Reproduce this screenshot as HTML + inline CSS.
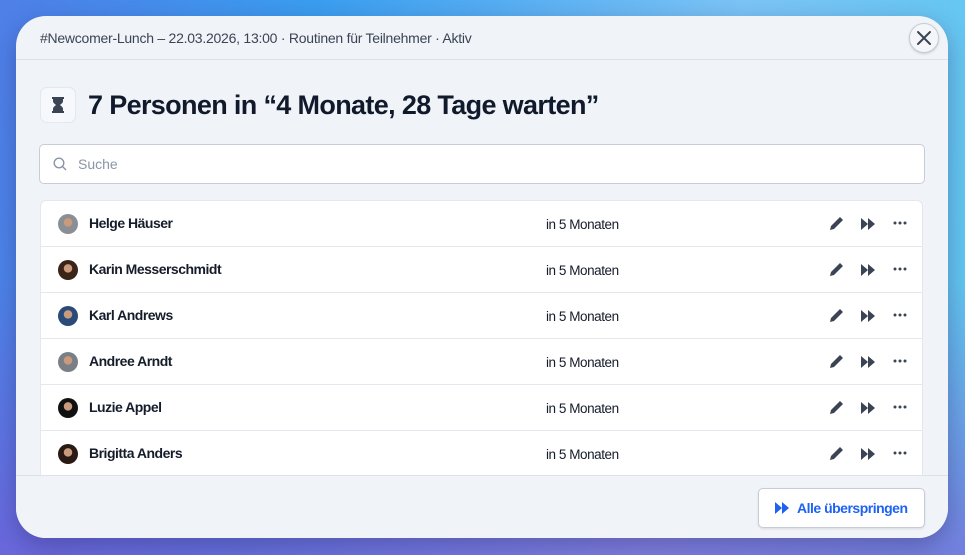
<!DOCTYPE html>
<html><head><meta charset="utf-8"><style>
*{box-sizing:border-box;margin:0;padding:0}
body{width:965px;height:555px;overflow:hidden;font-family:"Liberation Sans",sans-serif;
background:linear-gradient(100deg,#4f7fe8 0%,#3a9ef0 30%,#7cc4f6 70%,#5cc8f0 100%);position:relative}
.bg2{position:absolute;inset:0;background:linear-gradient(180deg,rgba(0,0,0,0) 50%,rgba(130,80,210,.6) 100%)}
.modal{position:absolute;left:16px;top:16px;width:932px;height:522px;background:#f0f3f8;border-radius:30px;overflow:hidden;box-shadow:0 8px 24px rgba(40,30,90,.35)}
.hdr{height:44px;border-bottom:1px solid #dde2ea;padding:0 24px;font-size:14px;color:#3b4454;line-height:44px;letter-spacing:-.25px}
.close{position:absolute;left:893px;top:7px;width:30px;height:30px;border-radius:50%;border:1px solid #c5ccd6;background:#f4f6f9;box-shadow:0 1px 2px rgba(0,0,0,.15)}
.ttl{position:absolute;left:24px;top:71px;display:flex;align-items:center}
.ib{width:36px;height:36px;border-radius:7px;background:#f7f8fb;border:1px solid #e3e7ee;display:flex;align-items:center;justify-content:center}
.ttl h1{font-size:27px;font-weight:bold;color:#111a2b;margin-left:12px;letter-spacing:-.65px}
.search{position:absolute;left:23px;top:128px;width:886px;height:40px;border:1px solid #c7cdd7;border-radius:5px;background:#fff;font-size:14px;color:#8a96a8;line-height:38px;padding-left:38px}
.search svg{position:absolute;left:13px;top:12px}
.list{position:absolute;left:24px;top:184px;width:883px;height:276px;background:#fff;border:1px solid #e3e7ee;border-bottom:none;border-radius:6px 6px 0 0;overflow:hidden}
.row{height:46px;border-bottom:1px solid #e3e7ee;position:relative;font-size:14px}
.av{position:absolute;left:17px;top:13px;width:20px;height:20px;border-radius:50%}
.nm{position:absolute;left:48px;top:14px;font-weight:bold;color:#151c2a;letter-spacing:-.5px}
.dt{position:absolute;left:505px;top:16px;color:#151c2a;font-size:13.5px;letter-spacing:-.45px}
.ic{position:absolute;top:15px}
.foot{position:absolute;left:0;top:459px;width:932px;height:63px;border-top:1px solid #dde2ea;background:#f0f3f8}
.btn{position:absolute;left:742px;top:12px;width:167px;height:40px;border:1px solid #c7cdd7;border-radius:5px;background:#fff;color:#1f62f2;font-weight:bold;font-size:14px;line-height:38px;padding-left:38px;letter-spacing:-.5px;box-shadow:0 1px 2px rgba(0,0,0,.1)}
.btn svg{position:absolute;left:16px;top:13px}
</style></head><body><div class="bg2"></div>
<div class="modal">
<div class="hdr">#Newcomer-Lunch – 22.03.2026, 13:00 · Routinen für Teilnehmer · Aktiv</div>
<div class="close"><svg width="28" height="28" viewBox="0 0 28 28"><path d="M8 8L20 20M20 8L8 20" stroke="#3b4454" stroke-width="2" stroke-linecap="round"/></svg></div>
<div class="ttl"><div class="ib"><svg width="12" height="16" viewBox="0 0 12 16"><path d="M0 0h12v2h-1v2c0 2-2 3-3 4 1 1 3 2 3 4v2h1v2H0v-2h1v-2c0-2 2-3 3-4-1-1-3-2-3-4V2H0z" fill="#3b4454"/></svg></div><h1>7 Personen in “4 Monate, 28 Tage warten”</h1></div>
<div class="search"><svg width="14" height="14" viewBox="0 0 14 14"><circle cx="6" cy="6" r="4.8" stroke="#8a96a8" stroke-width="1.4" fill="none"/><path d="M9.5 9.5L13 13" stroke="#8a96a8" stroke-width="1.4"/></svg>Suche</div>
<div class="list"></div>
<div class="foot"><div class="btn"><svg width="14" height="12" viewBox="0 0 14 12"><path d="M0 0l7 6-7 6zM7 0l7 6-7 6z" fill="#1f62f2"/></svg>Alle überspringen</div></div>
</div>
<script>
var names=["Helge Häuser","Karin Messerschmidt","Karl Andrews","Andree Arndt","Luzie Appel","Brigitta Anders","X"];
var bgs=["#8a8f95","#3a2418","#2a4a7a","#7a7f85","#111","#2a1a14","#333"];
var ic='<svg class="ic" style="left:787px" width="16" height="16" viewBox="0 0 16 16"><path d="M2 14l1-4 8-8 3 3-8 8zM11 2l1-1 3 3-1 1z" fill="#3b4454"/></svg><svg class="ic" style="left:820px;top:17px" width="14" height="12" viewBox="0 0 14 12"><path d="M0 0l7 6-7 6zM7 0l7 6-7 6z" fill="#3b4454"/></svg><svg class="ic" style="left:852px;top:20px" width="14" height="4" viewBox="0 0 14 4"><circle cx="2" cy="2" r="1.5" fill="#3b4454"/><circle cx="7" cy="2" r="1.5" fill="#3b4454"/><circle cx="12" cy="2" r="1.5" fill="#3b4454"/></svg>';
var h='';names.forEach(function(n,i){h+='<div class="row"><div class="av" style="background:radial-gradient(circle at 50% 42%,#c99a7c 0 26%,'+bgs[i]+' 29%)"></div><div class="nm">'+n+'</div><div class="dt">in 5 Monaten</div>'+ic+'</div>'});
document.querySelector('.list').innerHTML=h;
</script>
</body></html>
